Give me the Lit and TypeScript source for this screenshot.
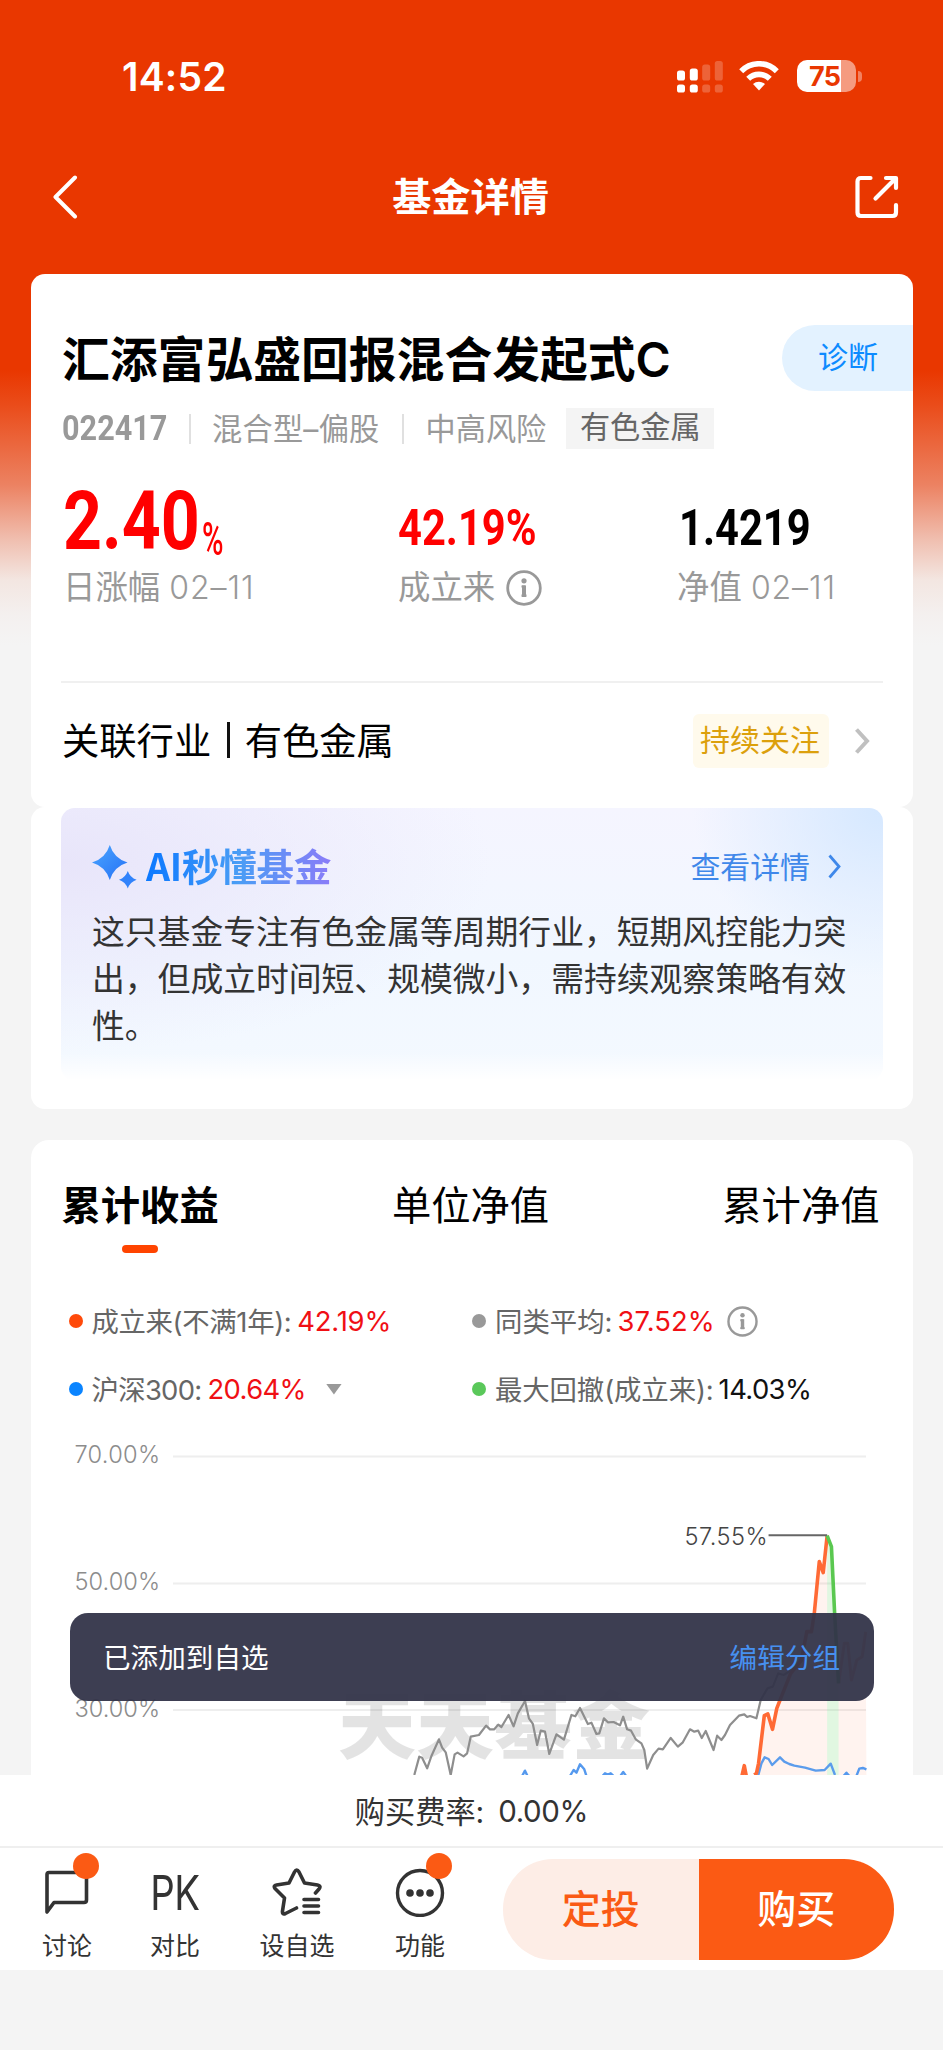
import { LitElement, html, svg, css } from "lit";
import { customElement } from "lit/decorators.js";

type Tone = "red" | "ink";
interface LegendItem {
  color: string;
  label: string;
  value: string;
  tone: Tone;
  extra?: "info" | "caret";
  cls: string;
}

const legend: LegendItem[] = [
  { color: "#ff4a0a", label: "成立来(不满1年):", value: "42.19%", tone: "red", cls: "l1" },
  { color: "#999999", label: "同类平均:", value: "37.52%", tone: "red", extra: "info", cls: "l2" },
  { color: "#0a84ff", label: "沪深300:", value: "20.64%", tone: "red", extra: "caret", cls: "l3" },
  { color: "#5ac85a", label: "最大回撤(成立来):", value: "14.03%", tone: "ink", cls: "l4" },
];

const averageLine =
  "236,825 250,770 258,773 272,805 284,768 305,718 314,743 324,757 338,825 349,763 357,758 374,769 384,760 394,710 417,705 437,677 448,688 460,688 471,674 480,681 500,645 514,679 526,640 546,603 557,655 568,672 580,735 590,692 602,695 614,762 634,703 655,719 676,645 687,649 700,624 722,672 732,668 746,702 754,700 767,655 778,667 794,666 812,676 821,650 832,688 843,692 856,718 872,730 880,750 888,806 905,765 920,746 932,748 954,714 974,740 988,727 1008,688 1020,695 1031,692 1041,714 1052,693 1074,750 1084,707 1096,720 1106,705 1120,675 1145,647 1160,643 1168,651 1176,648 1194,655 1206,600 1225,565 1240,560 1255,520 1270,525 1300,505";
const fundRise =
  "1188,825 1194,820 1200,790 1216,647 1226,642 1239,688 1251,625 1275,560 1290,520 1320,480 1335,395 1348,395 1356,340 1370,185 1381,218 1392,107";
const fundTail = "1424,550 1440,430 1450,430 1460,540 1475,480 1490,470 1500,395";
const indexLine =
  "1198,830 1208,790 1217,772 1228,777 1238,795 1260,772 1272,785 1286,792 1300,797 1330,803 1360,812 1385,810 1402,791 1414,825";

const infoIcon = (size: number) => html`<svg width=${size} height=${size} viewBox="0 0 36 36" fill="none">
  <circle cx="18" cy="18" r="16.3" stroke="#999" stroke-width="2.8"></circle>
  <circle cx="18" cy="10.8" r="2.6" fill="#999"></circle>
  <path d="M15.500 16.500H18V26M15.500 25.700H20.500" stroke="#999" stroke-width="2.200"></path>
  <path d="M18 15.400V27" stroke="#999" stroke-width="4"></path>
</svg>`;

@customElement("app-root")
export class AppRoot extends LitElement {
  static styles = css`
    :host {
      display: block;
      width: 943px;
      height: 2050px;
      overflow: hidden;
      color: #000;
      font-family: Inter, "Noto Sans CJK SC", sans-serif;
      background: linear-gradient(#e93700 0, #e93700 370px, #ea4c1a 405px, #ec8262 485px, #f0bfb0 540px, #f3e6e1 580px, #f4f0ef 615px, #f4f4f4 645px) #f4f4f4;
    }
    * { box-sizing: border-box; }
    svg { display: block; flex: none; }
    span, div, h1, p { white-space: nowrap; }
    h1, p { margin: 0; }
    .status { height: 120px; padding: 32px 81px 0 122px; display: flex; align-items: center; justify-content: space-between; color: #fff; }
    .clock { font-size: 39px; font-weight: 600; letter-spacing: 0.2px; }
    .icons { display: flex; align-items: center; }
    .wifi { margin-left: 16px; }
    .battery { margin-left: 18px; display: flex; align-items: center; gap: 2px; }
    .cell { width: 59px; height: 32px; border-radius: 10px; background: linear-gradient(90deg, #fff 44px, #f59b80 44px); color: #e93700; font-size: 27px; font-weight: 700; line-height: 33px; padding-left: 12px; letter-spacing: -0.8px; }
    .nub { width: 4px; height: 11px; border-radius: 0 5px 5px 0; background: #f28160; }
    .nav { height: 154px; padding: 0 44px 0 53px; display: flex; align-items: center; justify-content: space-between; color: #fff; }
    .nav-title { font-size: 39.2px; font-weight: 700; line-height: 50px; margin-left: 7px; }
    .card { margin: 0 30px 0 31px; background: #fff; }
    .summary { height: 533px; border-radius: 14px; padding-top: 51px; overflow: hidden; }
    .title-row { height: 66px; display: flex; align-items: center; justify-content: space-between; padding-left: 31px; }
    .name { font-size: 47.8px; font-weight: 700; line-height: 66px; padding-top: 3px; }
    .name .latin { font-weight: 600; letter-spacing: -1px; }
    .diagnose { width: 131px; height: 66px; border-radius: 33px 0 0 33px; background: #e3f2ff; color: #0d8bff; font-size: 30px; line-height: 65px; padding-left: 36px; }
    .meta { height: 41px; margin-top: 17px; padding-left: 31px; display: flex; align-items: center; color: #999; font-size: 30.2px; }
    .code { width: 105px; font-family: Roboto, sans-serif; font-weight: 700; font-size: 35px; transform: scaleX(0.875); transform-origin: left; margin-right: 22px; }
    .bar { width: 2px; height: 30px; background: #e0e0e0; }
    .kind, .risk { padding-bottom: 4px; }
    .kind { margin: 0 22px 0 21px; letter-spacing: 0.25px; }
    .risk { margin: 0 20px 0 22px; }
    .sector { height: 41px; line-height: 39px; background: #f4f4f4; color: #666; width: 148px; text-align: center; }
    .numbers { height: 90px; margin-top: 28px; padding-left: 32px; display: grid; grid-template-columns: 335px 281px 1fr; font-family: Roboto, sans-serif; line-height: 90px; font-weight: 700; }
    .big { color: #f00; display: flex; }
    .big .digits { font-size: 81px; width: 139px; transform: scaleX(0.84); transform-origin: left; }
    .big .pct { font-size: 43px; font-weight: 500; padding-top: 16px; transform: scale(0.68, 1.08); transform-origin: left; }
    .mid { font-size: 50.5px; padding-top: 6px; transform: scaleX(0.825); transform-origin: left; }
    .mid.red { color: #f00; }
    .labels { height: 40px; margin-top: 1px; padding-left: 32px; display: grid; grid-template-columns: 335px 279px 1fr; color: #999; font-size: 32.4px; line-height: 40px; }
    .labels .since { display: flex; align-items: center; gap: 11px; }
    .date { font-size: 32px; font-weight: 300; letter-spacing: 0.9px; }
    .rule { margin: 73px 30px 0; height: 2px; background: #f0f0f0; }
    .related { height: 115px; padding: 0 43px 0 31px; display: flex; align-items: center; }
    .related-name { font-size: 37.3px; flex: 1; display: flex; align-items: center; padding-bottom: 4px; }
    .pipe { width: 2.5px; height: 36px; background: #111; margin: 2px 15px 0 16px; }
    .follow { width: 136px; height: 54px; line-height: 52px; border-radius: 6px; background: #fffaec; color: #dca00c; font-size: 30px; padding-left: 7px; margin-right: 26px; }
    .ai-card { height: 302px; border-radius: 14px; padding: 1px 30px 0; }
    .ai { height: 272px; border-radius: 14px; padding: 31px 31px 0; background:
      linear-gradient(rgba(255,255,255,0) 90%, #fff 100%),
      radial-gradient(ellipse 190px 170px at 100% 0, #d5e8ff, rgba(213,232,255,0)),
      radial-gradient(ellipse 430px 190px at 0 20%, #e8e5fa, rgba(232,229,250,0)),
      linear-gradient(#f5f5ff, #f1f7ff 55%, #f4f9ff); }
    .ai-head { height: 56px; display: flex; align-items: center; }
    .ai-title { font-family: "Noto Sans CJK SC", sans-serif; font-size: 37.5px; line-height: 50px; font-weight: 700; margin: -4px 0 0 8px; background: linear-gradient(90deg, #0b78ff, #4a9df5 50%, #8a7cf8); -webkit-background-clip: text; background-clip: text; color: transparent; letter-spacing: -0.2px; }
    .more { margin-left: auto; margin-right: 11px; display: flex; align-items: center; gap: 18px; font-size: 29.9px; color: #3f88ea; margin-top: -4px; }
    .more svg { margin-top: 3px; }
    .ai p { margin-top: 14px; width: 770px; white-space: normal; font-size: 32.8px; line-height: 47px; color: #333; }
    .perf { margin-top: 31px; height: 635px; border-radius: 18px 18px 0 0; padding-top: 36px; position: relative; overflow: hidden; }
    .tabs { padding: 0 33.5px 0 30.5px; height: 77px; display: flex; justify-content: space-between; font-size: 39.3px; line-height: 60px; }
    .tab.on { font-weight: 700; }
    .tab.on::after { content: ""; display: block; width: 36px; height: 8px; border-radius: 4px; background: #ff4400; margin: 9px auto 0; }
    .legend { margin-top: 34px; padding-left: 37.5px; display: grid; grid-template-columns: 403.5px 1fr; grid-auto-rows: 68px; align-items: center; font-size: 27.4px; }
    .item { display: flex; align-items: center; }
    .dot { width: 14px; height: 14px; border-radius: 50%; margin-right: 9px; flex: none; }
    .label { color: #666; padding-bottom: 2px; }
    .value { margin-left: 6px; padding-bottom: 1px; }
    .value.red { color: #f00f14; }
    .value.ink { color: #111; }
    .l1 .label { letter-spacing: -0.35px; }
    .l1 .value { letter-spacing: -0.2px; }
    .l2 .value { margin-left: 5px; letter-spacing: 0.1px; }
    .l3 .label { letter-spacing: -0.7px; }
    .l3 .value { letter-spacing: -0.6px; }
    .l4 .label { letter-spacing: -0.1px; }
    .l4 .value { margin-left: 5px; letter-spacing: -0.6px; }
    .extra { margin-left: 12px; }
    .caret { margin-left: 20px; width: 16px; height: 11px; background: #999; clip-path: polygon(0 0, 100% 0, 50% 100%); }
    .chart { height: 352px; position: relative; }
    .chart text { font-family: Inter, sans-serif; }
    .chart .mark { font-family: "Noto Sans CJK SC", sans-serif; font-weight: 900; }
    .toast { position: absolute; left: 39px; top: 190px; width: 804px; height: 88px; border-radius: 18px; background: rgba(51, 52, 73, 0.95); display: flex; align-items: center; justify-content: space-between; padding: 0 34px 3px 33px; color: #fff; font-size: 27.6px; }
    .toast .edit { color: #4790f0; }
    .fee { height: 73px; background: #fff; border-bottom: 2px solid #efefef; display: flex; align-items: center; justify-content: center; font-size: 30.2px; color: #333; padding-bottom: 2px; gap: 14px; }
    .fee .rate { font-size: 29.5px; letter-spacing: -0.4px; padding-top: 2px; }
    .dock { height: 122px; background: #fff; display: flex; align-items: flex-start; padding: 11px 49px 0 18px; }
    .act { position: relative; width: 98px; display: flex; flex-direction: column; align-items: center; color: #333; font-size: 25px; line-height: 30px; }
    .act.pk { margin-left: 10px; }
    .act.star { margin-left: 24px; }
    .act.fn { margin-left: 25px; }
    .act .glyph { height: 64px; margin: 1px 0 7px; display: flex; align-items: center; }
    .pk .glyph { font-size: 48px; letter-spacing: -0.5px; font-weight: 400; transform: scaleX(0.8); padding-top: 2px; }
    .badge { position: absolute; left: 55px; top: -6px; width: 26px; height: 26px; border-radius: 50%; background: #fb5a14; }
    .buttons { margin-left: auto; width: 391px; height: 101px; display: grid; grid-template-columns: 1fr 1fr; border-radius: 50px; overflow: hidden; font-size: 39px; font-weight: 500; line-height: 99px; text-align: center; }
    .plan { background: #fdede6; color: #fa5a14; }
    .buy { background: #fb5a14; color: #fff; }
  `;

  private statusBar() {
    return html`<div class="status">
      <span class="clock">14:52</span>
      <div class="icons">
        <svg width="46" height="33" viewBox="0 0 46 33" fill="#fff">
          <rect x="0" y="10.5" width="8" height="10" rx="2.6"></rect>
          <rect x="12.8" y="8.5" width="8" height="12" rx="2.6"></rect>
          <rect x="0" y="24.5" width="8" height="8" rx="2.6"></rect>
          <rect x="12.8" y="24.5" width="8" height="8" rx="2.6"></rect>
          <g opacity="0.22">
            <rect x="25.2" y="4.5" width="8" height="16" rx="2.6"></rect>
            <rect x="37.8" y="1" width="8" height="19.5" rx="2.6"></rect>
            <rect x="25.2" y="24.5" width="8" height="8" rx="2.6"></rect>
            <rect x="37.8" y="24.5" width="8" height="8" rx="2.6"></rect>
          </g>
        </svg>
        <svg class="wifi" width="40" height="30" viewBox="0 0 40 30" fill="none" stroke="#fff" stroke-width="5.6">
          <path d="M2.2 10.2A25 25 0 0 1 37.8 10.2"></path>
          <path d="M9.2 17.8A15.4 15.4 0 0 1 30.8 17.8"></path>
          <path d="M14 23A8.8 8.8 0 0 1 26 23L20 29.400Z" fill="#fff" stroke="none"></path>
        </svg>
        <div class="battery"><div class="cell">75</div><div class="nub"></div></div>
      </div>
    </div>`;
  }

  private navBar() {
    return html`<div class="nav">
      <svg width="26" height="44" viewBox="0 0 26 44" fill="none" stroke="#fff" stroke-width="4" stroke-linecap="round" stroke-linejoin="round"><path d="M22 2.5L2.500 22L22 41.5"></path></svg>
      <span class="nav-title">基金详情</span>
      <svg width="44" height="44" viewBox="0 0 44 44" fill="none" stroke="#fff" stroke-width="4.200" stroke-linecap="round" stroke-linejoin="round">
        <path d="M15.500 3H6Q2.500 3 2.500 6.500V37.500Q2.500 41 6 41H37.500Q41 41 41 37.500V30"></path>
        <path d="M31 3H41V13M40 4L20.500 23.500"></path>
      </svg>
    </div>`;
  }

  private summary() {
    return html`<section class="card summary">
      <div class="title-row">
        <h1 class="name">汇添富弘盛回报混合发起式<span class="latin">C</span></h1>
        <div class="diagnose">诊断</div>
      </div>
      <div class="meta">
        <span class="code">022417</span><i class="bar"></i>
        <span class="kind">混合型–偏股</span><i class="bar"></i>
        <span class="risk">中高风险</span><span class="sector">有色金属</span>
      </div>
      <div class="numbers">
        <div class="big"><span class="digits">2.40</span><span class="pct">%</span></div>
        <div class="mid red">42.19%</div>
        <div class="mid">1.4219</div>
      </div>
      <div class="labels">
        <span>日涨幅 <span class="date">02–11</span></span>
        <span class="since">成立来 ${infoIcon(36)}</span>
        <span>净值 <span class="date">02–11</span></span>
      </div>
      <div class="rule"></div>
      <div class="related">
        <div class="related-name">关联行业<i class="pipe"></i>有色金属</div>
        <div class="follow">持续关注</div>
        <svg width="15" height="26" viewBox="0 0 15 26" fill="none" stroke="#c0c0c0" stroke-width="4"><path d="M1.500 1.500L12 13L1.500 24.500"></path></svg>
      </div>
    </section>`;
  }

  private aiCard() {
    return html`<section class="card ai-card">
      <div class="ai">
        <div class="ai-head">
          <svg width="46" height="46" viewBox="0 0 46 46">
            <defs><linearGradient id="spark" x1="0" y1="0" x2="1" y2="1"><stop offset="0" stop-color="#4ba6ff"></stop><stop offset="1" stop-color="#2470f5"></stop></linearGradient></defs>
            <path fill="url(#spark)" d="M17.800 1Q22 14.500 35.500 18.500Q22 22.500 17.800 36Q13.500 22.500 0 18.500Q13.500 14.500 17.800 1Z"></path>
            <path fill="#3183fb" d="M35.800 27Q38 33.500 44.600 35.800Q38 38 35.800 44.600Q33.500 38 27 35.800Q33.500 33.500 35.800 27Z"></path>
          </svg>
          <span class="ai-title">AI秒懂基金</span>
          <div class="more">查看详情
            <svg width="13" height="25" viewBox="0 0 13 25" fill="none" stroke="#3f88ea" stroke-width="2.800"><path d="M1.500 1.500L11 12.500L1.500 23.500"></path></svg>
          </div>
        </div>
        <p>这只基金专注有色金属等周期行业，短期风控能力突出，但成立时间短、规模微小，需持续观察策略有效性。</p>
      </div>
    </section>`;
  }

  private chart() {
    const grid = [
      { y: 33.5, t: "70.00%" },
      { y: 160.5, t: "50.00%" },
      { y: 287, t: "30.00%" },
    ];
    return html`<div class="chart">
      <svg width="882" height="352" viewBox="0 0 882 352" fill="none">
        ${grid.map((g) => svg`<text x="43.500" y=${g.y + 6.5} font-size="23.6" font-weight="300" fill="#8c8c8c" textLength="85.500" lengthAdjust="spacing">${g.t}</text>
          <path d="M142 ${g.y}H835" stroke="#eeeeee" stroke-width="2"></path>`)}
        <text class="mark" x="0" y="0" transform="translate(307 329.500) scale(1 .95)" font-size="78" fill="#000" fill-opacity="0.11">天天基金</text>
        <text x="653.500" y="121.500" font-size="23.600" font-weight="300" fill="#444" textLength="83" lengthAdjust="spacing">57.55%</text>
        <g transform="translate(299 77) scale(.35714 .33333)" stroke-linejoin="round">
          <polygon fill="#ff5a1e" fill-opacity="0.07" points="${fundRise} 1392,840 1180,840"></polygon>
          <polygon fill="#ff5a1e" fill-opacity="0.07" points="1424,840 ${fundTail} 1502,840"></polygon>
          <polygon fill="#5ad25a" fill-opacity="0.18" points="1392,107 1404,140 1413,340 1424,550 1424,840 1392,840"></polygon>
          <polyline points=${averageLine} stroke="#8e8e8e" stroke-width="2.200" vector-effect="non-scaling-stroke"></polyline>
          <path d="M538 828L546 812L553 828M672 828L682 810L690 818L700 793L712 808L718 828M763 828L770 820L778 824L786 820L794 828M813 828L821 816L829 828M1438 828L1446 818L1454 828M1474 828L1482 806L1492 804L1502 808" stroke="#5599ee" stroke-width="2.400" vector-effect="non-scaling-stroke"></path>
          <polyline points=${indexLine} stroke="#5b9cec" stroke-width="2.400" vector-effect="non-scaling-stroke"></polyline>
          <path d="M1153 830L1160 797L1166 830" stroke="#ff6a35" stroke-width="3.600" vector-effect="non-scaling-stroke"></path>
          <polyline points=${fundRise} stroke="#ff6a35" stroke-width="3.600" vector-effect="non-scaling-stroke"></polyline>
          <polyline points=${fundTail} stroke="#ff6a35" stroke-width="3" stroke-opacity="0.6" vector-effect="non-scaling-stroke"></polyline>
          <path d="M1228 106H1392" stroke="#666" stroke-width="2" vector-effect="non-scaling-stroke"></path>
          <path d="M1392 107L1404 140L1413 340L1424 550" stroke="#5ac850" stroke-width="3.600" vector-effect="non-scaling-stroke"></path>
        </g>
      </svg>
      <div class="toast"><span>已添加到自选</span><span class="edit">编辑分组</span></div>
    </div>`;
  }

  private performance() {
    return html`<section class="card perf">
      <div class="tabs"><div class="tab on">累计收益</div><div class="tab">单位净值</div><div class="tab">累计净值</div></div>
      <div class="legend">
        ${legend.map((l) => html`<div class="item ${l.cls}">
          <i class="dot" style="background:${l.color}"></i><span class="label">${l.label}</span><span class="value ${l.tone}">${l.value}</span>
          ${l.extra === "info" ? html`<span class="extra">${infoIcon(31)}</span>` : ""}
          ${l.extra === "caret" ? html`<i class="caret"></i>` : ""}
        </div>`)}
      </div>
      ${this.chart()}
    </section>`;
  }

  private dock() {
    return html`<div class="fee"><span>购买费率:</span><span class="rate">0.00%</span></div>
      <div class="dock">
        <div class="act">
          <div class="glyph"><svg width="46" height="48" viewBox="0 0 46 48" fill="none" stroke="#333" stroke-width="3.600" stroke-linejoin="round"><path d="M3 44V6.500Q3 4.500 5 4.500H40Q42.500 4.500 42.500 7V32Q42.500 34.500 40 34.500H10Z"></path></svg></div>
          讨论<i class="badge"></i>
        </div>
        <div class="act pk"><div class="glyph">PK</div>对比</div>
        <div class="act star">
          <div class="glyph"><svg width="50" height="50" viewBox="0 0 50 50" fill="none" stroke="#333" stroke-width="3.600" stroke-linejoin="round" stroke-linecap="round">
            <path d="M24.500 41L13.500 46.500Q10 48 10.500 44L12.500 31L3 21.500Q1 18.500 4.500 18L17 16L22.500 5Q24.700 1 27 5L32.500 16L45.500 18Q49.500 19 47 22L43.500 26"></path>
            <path d="M32 32.500H46.500M32 39H46.500M32 45.500H46.500"></path></svg></div>
          设自选
        </div>
        <div class="act fn">
          <div class="glyph"><svg width="50" height="50" viewBox="0 0 50 50" fill="#333"><circle cx="25" cy="26" r="22.500" fill="none" stroke="#333" stroke-width="3.400"></circle><circle cx="15" cy="26" r="3.800"></circle><circle cx="25" cy="26" r="3.800"></circle><circle cx="35" cy="26" r="3.800"></circle></svg></div>
          功能<i class="badge"></i>
        </div>
        <div class="buttons"><div class="plan">定投</div><div class="buy">购买</div></div>
      </div>`;
  }

  render() {
    return html`${this.statusBar()}${this.navBar()}${this.summary()}${this.aiCard()}${this.performance()}${this.dock()}`;
  }
}
